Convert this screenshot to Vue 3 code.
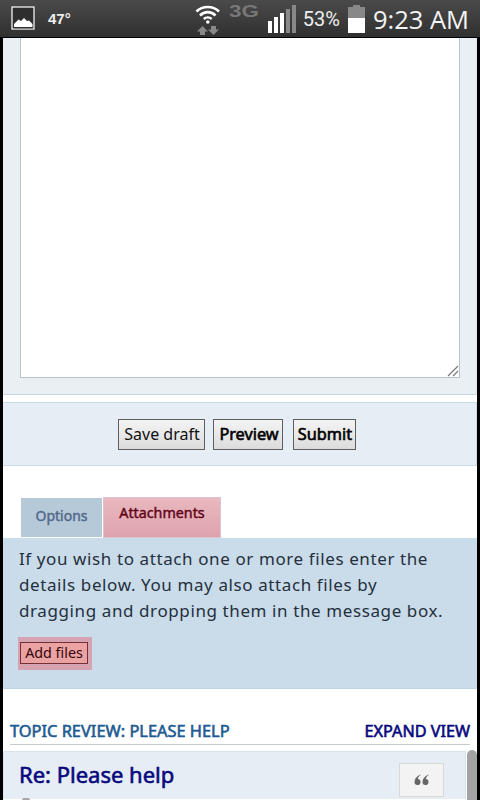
<template>
  <div class="screen">
    <header class="status">
      <div class="status-left">
        <svg class="pic" width="25" height="25" viewBox="0 0 25 25">
          <rect x="1" y="1" width="22" height="22" fill="#2e2e2e" stroke="#fff" stroke-width="1.2"/>
          <path d="M3 21V18L7.500 13.500 10 15 13 12 16 15 18 14.500 21.500 18V21Z" fill="#fff"/>
          <path d="M3 22.500H22" stroke="#888" stroke-width="1"/>
        </svg>
        <span class="temp">47°</span>
      </div>
      <div class="status-right">
        <svg class="wifi" width="26" height="34" viewBox="0 0 26 34">
          <path d="M1.500 9.500C7.500 3.500 18 3.500 24 9.500" fill="none" stroke="#fff" stroke-width="2.600"/>
          <path d="M5 13.500C9.500 9 16 9 20.500 13.500" fill="none" stroke="#fff" stroke-width="2.600"/>
          <path d="M8.800 17C11 15 14.500 15 16.700 17" fill="none" stroke="#fff" stroke-width="2.400"/>
          <circle cx="12.800" cy="20" r="1.800" fill="#fff"/>
          <path d="M7.500 24 2 29.500H5V33H10V29.500H13Z M16 24V27.500H13L18.500 33 24 27.500H21V24Z" fill="#888"/>
        </svg>
        <span class="g3">3G</span>
        <svg class="bars" width="28" height="29" viewBox="0 0 28 29">
          <rect x="0" y="17" width="4" height="12" fill="#fff"/>
          <rect x="6" y="13" width="4" height="16" fill="#fff"/>
          <rect x="12" y="9" width="4" height="20" fill="#fff"/>
          <rect x="18" y="5" width="4" height="24" fill="#888"/>
          <rect x="24" y="1" width="4" height="28" fill="#888"/>
        </svg>
        <span class="pct">53%</span>
        <svg class="batt" width="18" height="29" viewBox="0 0 18 29">
          <path d="M5 1H12V3H17V14H0V3H5Z" fill="#888"/>
          <rect x="0" y="14" width="17" height="15" fill="#fff"/>
        </svg>
        <span class="clock">9:23 AM</span>
      </div>
    </header>
    <main class="page">
      <section class="editor">
        <div class="textarea">
          <svg class="grip" width="12" height="12" viewBox="0 0 12 12">
            <path d="M1 11 11 1M6 11 11 6" stroke="#777" stroke-width="1.200"/>
          </svg>
        </div>
      </section>
      <section class="actions">
        <button class="btn draft">Save draft</button>
        <button class="btn strong preview">Preview</button>
        <button class="btn strong submit">Submit</button>
      </section>
      <nav class="tabs">
        <span class="tab">Options</span>
        <span class="tab active">Attachments</span>
      </nav>
      <section class="attach">
        <p>If you wish to attach one or more files enter the details below. You may also attach files by dragging and dropping them in the message box.</p>
        <div class="add-halo"><button class="add">Add files</button></div>
      </section>
      <div class="review">
        <span class="review-title">TOPIC REVIEW: PLEASE HELP</span>
        <span class="expand">EXPAND VIEW</span>
      </div>
      <section class="post">
        <h3>Re: Please help</h3>
        <span class="quote">
          <svg width="15" height="11" viewBox="0 0 15 11">
            <path id="q" d="M6.500 0.500C2.500 2 0.500 5 0.500 8A3 3 0 1 0 3.800 5C4 3.500 5 2 6.800 1Z" fill="#666"/>
            <path d="M14.500 0.500C10.500 2 8.500 5 8.500 8A3 3 0 1 0 11.800 5C12 3.500 13 2 14.800 1Z" fill="#666"/>
          </svg>
        </span>
        <span class="post-icon"></span>
      </section>
      <div class="scroll"></div>
    </main>
  </div>
</template>

<script setup>
</script>

<style>
html, body { margin: 0; background: #000; }
</style>

<style scoped>
.screen { width: 480px; height: 800px; overflow: hidden; background: #000; font-family: "Noto Sans", "DejaVu Sans", sans-serif; }
.status { height: 37px; margin-bottom: 1px; padding: 0 11px; display: flex; justify-content: space-between; align-items: center; background: linear-gradient(#4a4a4a, #303030); color: #fff; box-sizing: border-box; }
.status-left { display: flex; align-items: center; gap: 12px; }
.pic { display: block; }
.temp { font: bold 15px "Liberation Sans", sans-serif; color: #eee; }
.status-right { display: flex; align-items: center; }
.wifi { margin-right: 8px; }
.g3 { width: 30px; text-align: center; font: bold 16px "Liberation Sans", sans-serif; color: #777; align-self: flex-start; margin: 1px 9px 0 0; transform: scaleX(1.4); }
.bars { margin-right: 7px; }
.pct { font: 20px "Roboto", sans-serif; color: #eee; margin-right: 8px; }
.batt { margin-right: 7px; }
.clock { font: 25.500px "Open Sans", sans-serif; color: #f4f4f4; }
.page { position: relative; width: 474px; height: 762px; margin-left: 3px; background: #fff; overflow: hidden; }
.editor { height: 357px; box-sizing: border-box; padding: 0 17px 17px; background: #e9eff3; border-bottom: 1px solid #c6d7e4; border-right: 1px solid #dfe8ee; }
.textarea { position: relative; height: 340px; width: 440px; box-sizing: border-box; background: #fff; border: 1px solid #b8c2c8; border-top: 0; }
.grip { position: absolute; right: 0; bottom: 0; }
.actions { margin-top: 7px; height: 64px; box-sizing: border-box; display: flex; justify-content: center; align-items: center; background: #e6edf4; border: 1px solid #c9dae7; border-width: 1px 1px 1px 0; padding-right: 6px; }
.btn { height: 31px; background: linear-gradient(#f4f4f4, #dcdcdc); border: 1px solid #5e5e5e; border-radius: 0; color: #111; font: 16px "Noto Sans", sans-serif; box-sizing: border-box; padding: 0 0 0 2px; }
.btn.strong { font-size: 16.300px; -webkit-text-stroke: 0.6px #000; color: #000; }
.draft { width: 87px; }
.preview { width: 70px; margin-left: 8px; padding-left: 3px; }
.submit { width: 63px; margin-left: 10px; }
.tabs { display: flex; margin: 31px 0 0 18px; height: 41px; align-items: flex-start; gap: 1px; }
.tab { width: 81px; height: 39px; margin-top: 1px; padding-bottom: 4px; display: flex; align-items: center; justify-content: center; background: #b6c9d9; color: #536a8a; font: 14px "Noto Sans", sans-serif; -webkit-text-stroke: 0.45px #536a8a; box-sizing: border-box; }
.tab.active { width: 118px; height: 41px; margin-top: 0; padding-bottom: 0; font-size: 14.300px; background: linear-gradient(#ebb9c0, #dca2ad); color: #630619; -webkit-text-stroke: 0.45px #630619; box-shadow: 0 0 0 1px #dbc3d2 inset; align-items: flex-start; padding-top: 6px; }
.attach { height: 151px; box-sizing: border-box; padding: 8px 30px 0 16px; background: #cadbea; border-bottom: 1px solid #bfd2e2; }
.attach p { margin: 0; font-size: 17px; line-height: 26px; letter-spacing: 0.6px; color: #24303c; }
.add-halo { display: inline-block; margin-top: 13px; margin-left: -1px; padding: 5px 4px 6px 2px; background: #d6a3b0; }
.add { display: block; height: 22px; width: 68px; padding: 0; background: #eaa2a2; border: 1px solid #743034; color: #35050c; font: 14.300px/18px "Noto Sans", sans-serif; box-sizing: border-box; }
.review { display: flex; justify-content: space-between; margin: 31px 7px 0; height: 25px; align-items: flex-start; border-bottom: 1px solid #c6cbcf; box-sizing: border-box; }
.review-title { color: #1d5a92; font: 16.400px/22px "Noto Sans", sans-serif; -webkit-text-stroke: 0.6px #1d5a92; }
.expand { color: #07087e; font: 16.200px/22px "Noto Sans", sans-serif; -webkit-text-stroke: 0.6px #07087e; }
.post { position: relative; margin-top: 6px; height: 48px; background: #e6edf4; border: 1px solid #d6e2ec; border-bottom: 0; margin-right: 11px; box-sizing: border-box; padding: 7px 15px; }
.post h3 { margin: 0; color: #07087e; font: 22px/30px "Noto Sans", sans-serif; -webkit-text-stroke: 0.6px #07087e; }
.quote { position: absolute; right: 21px; top: 11px; width: 45px; height: 34px; box-sizing: border-box; background: #f3f3f3; border: 1px solid #d8d8d8; display: flex; justify-content: center; align-items: flex-start; padding-top: 10px; }
.post-icon { position: absolute; left: 18px; top: 46px; width: 8px; height: 2px; background: #a8a8a8; border-radius: 2px 2px 0 0; }
.scroll { position: absolute; right: 0; bottom: 0; width: 10px; height: 50px; background: #a3a3a3; border-radius: 5px 5px 0 0; }
</style>
